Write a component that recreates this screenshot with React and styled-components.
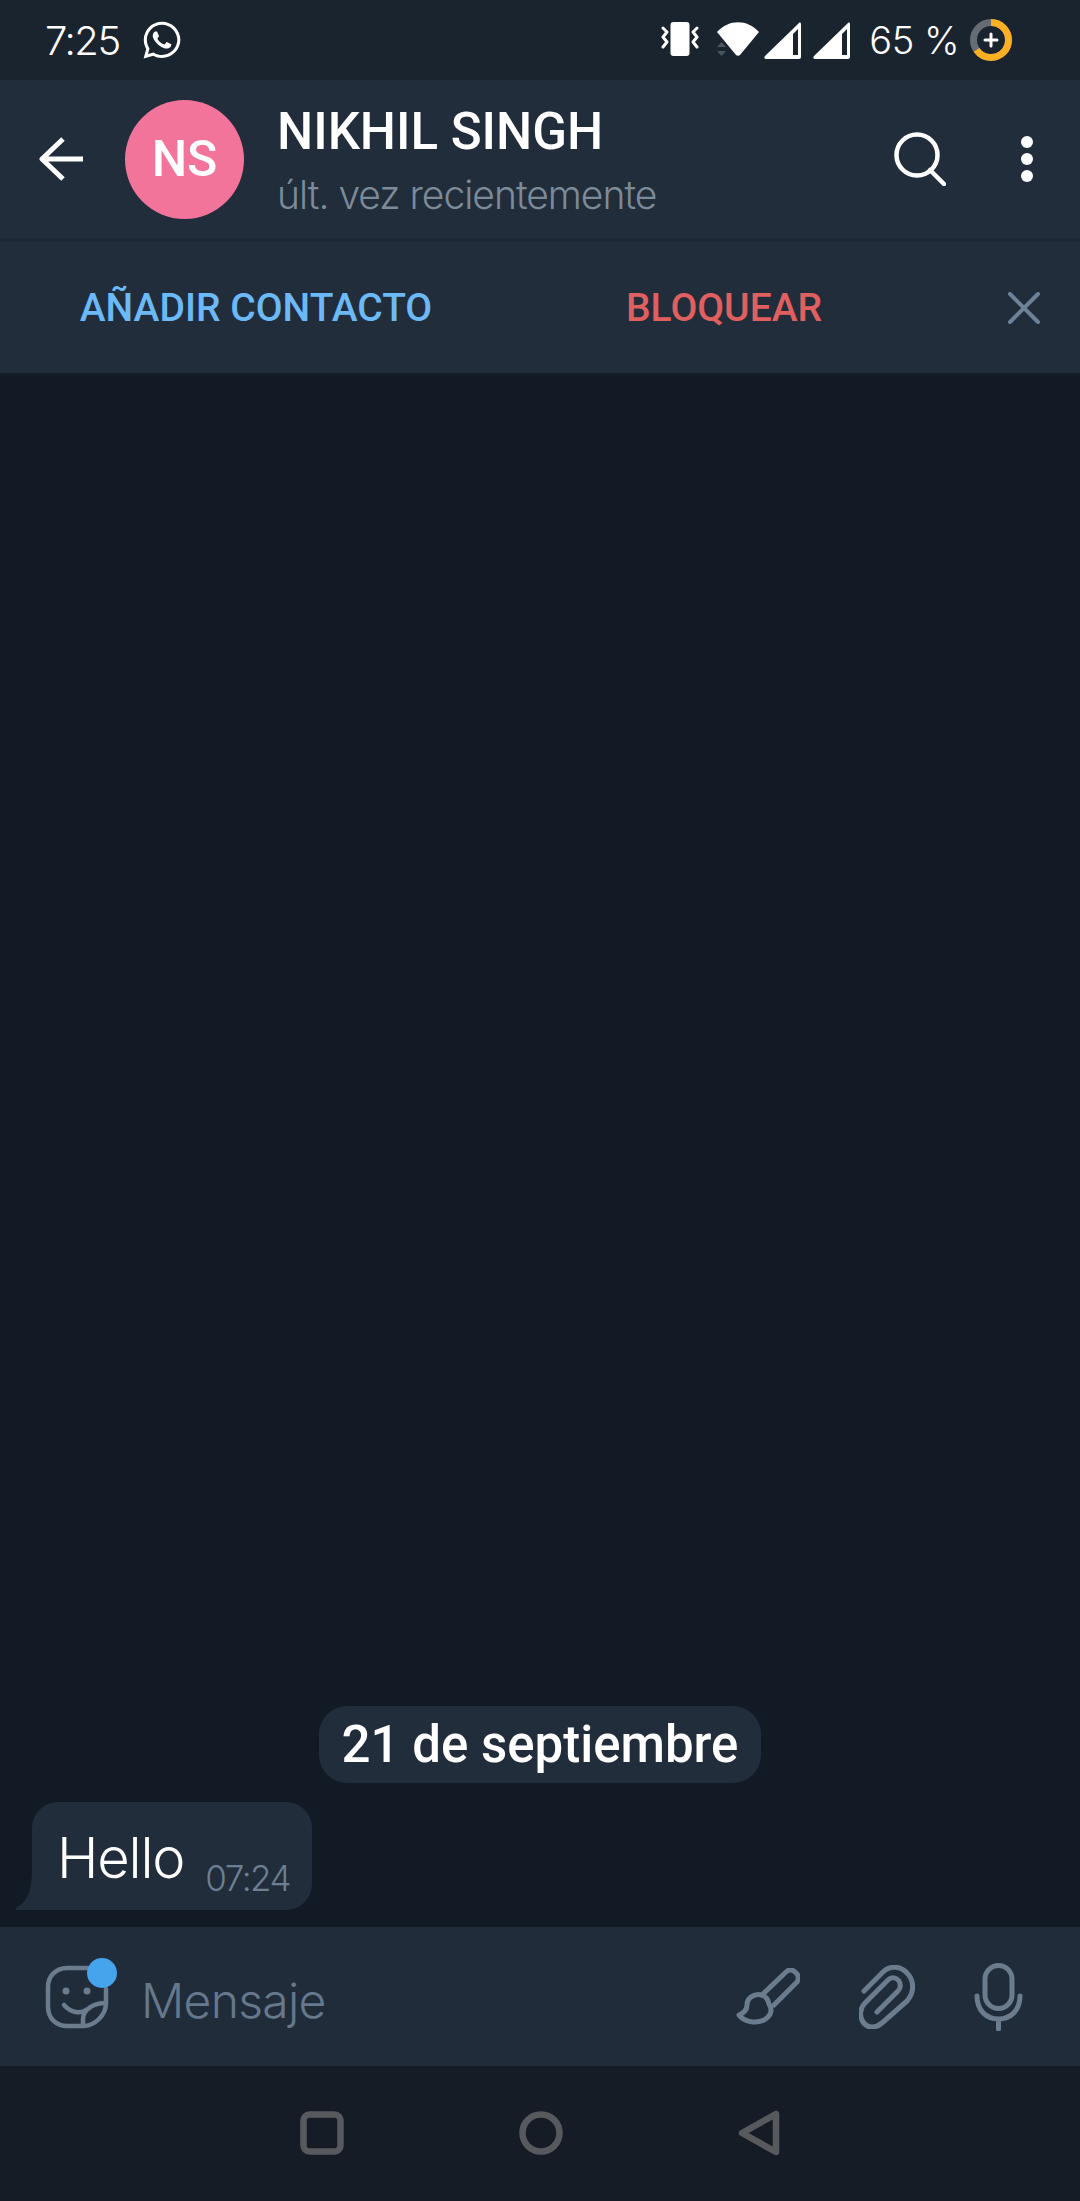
import React from 'react';
import styled, { createGlobalStyle } from 'styled-components';
import { FaWhatsapp } from 'react-icons/fa';

const GlobalStyle = createGlobalStyle`
  html, body {
    margin: 0;
    padding: 0;
    background: #121b25;
  }
`;

const Screen = styled.div`
  width: 1080px;
  height: 2201px;
  display: flex;
  flex-direction: column;
  overflow: hidden;
  background: #121b25;
  font-family: Inter, "Liberation Sans", sans-serif;
  color: #fff;
`;

const StatusBar = styled.div`
  flex: 0 0 80px;
  display: flex;
  align-items: center;
  padding: 0 68px 0 45px;
  box-sizing: border-box;
  background: #1a242f;
  font-weight: 300;
  font-size: 38px;
`;

const Time = styled.span`
  margin-right: 21px;
  font-size: 40px;
  letter-spacing: -1.5px;
`;

const StatusRight = styled.div`
  margin-left: auto;
  display: flex;
  align-items: center;
`;

const Battery = styled.span`
  margin: 0 11px 0 19px;
  letter-spacing: -0.5px;
`;

const Header = styled.div`
  flex: 0 0 162px;
  display: flex;
  align-items: center;
  padding: 0 34px 0 39px;
  box-sizing: border-box;
  background: #212d3b;
  border-bottom: 4px solid #1e2936;
`;

const Avatar = styled.div`
  width: 119px;
  height: 119px;
  margin: 0 33px 0 40px;
  border-radius: 50%;
  background: #f2749a;
  display: flex;
  align-items: center;
  justify-content: center;
  font-family: Roboto, sans-serif;
  font-weight: 500;
  font-size: 50px;
`;

const Names = styled.div`
  display: flex;
  flex-direction: column;
  flex: 1;
`;

const Name = styled.div`
  font-family: Roboto, sans-serif;
  font-weight: 500;
  font-size: 51px;
  line-height: 60px;
`;

const Seen = styled.div`
  margin-top: 11px;
  font-weight: 300;
  font-size: 39px;
  line-height: 44px;
  letter-spacing: -1px;
  color: #7d8b99;
`;

const Dots = styled.div`
  margin-left: 75px;
  margin-right: 13px;
  display: flex;
  flex-direction: column;
  gap: 5px;
`;

const Dot = styled.i`
  display: block;
  width: 12px;
  height: 12px;
  border-radius: 50%;
  background: #fff;
`;

const ActionBar = styled.div`
  flex: 0 0 133px;
  display: grid;
  grid-template-columns: 512px 424px 1fr;
  align-items: center;
  box-sizing: border-box;
  background: #212d3b;
  border-bottom: 2px solid #141d27;
`;

const Action = styled.div`
  text-align: center;
  font-family: Roboto, sans-serif;
  font-weight: 500;
  font-size: 39px;
  color: ${({ danger }) => (danger ? '#e05f5f' : '#6cb9f8')};
`;

const CloseWrap = styled.div`
  display: flex;
  justify-content: flex-end;
  padding-right: 40px;
`;

const Chat = styled.div`
  flex: 1;
  display: flex;
  flex-direction: column;
  justify-content: flex-end;
  padding: 0 0 17px 15px;
`;

const DatePill = styled.div`
  align-self: center;
  margin: 0 0 19px -15px;
  height: 77px;
  padding: 0 23px;
  display: flex;
  align-items: center;
  border-radius: 28px;
  background: #212d3b;
  font-family: Roboto, sans-serif;
  font-weight: 500;
  font-size: 51px;
`;

const BubbleRow = styled.div`
  display: flex;
  align-items: flex-end;
`;

const Tail = styled.svg`
  display: block;
  flex: none;
`;

const Bubble = styled.div`
  width: 280px;
  height: 108px;
  box-sizing: border-box;
  padding: 0 22px 0 25px;
  display: flex;
  align-items: flex-end;
  justify-content: space-between;
  background: #212d3b;
  border-radius: 26px 26px 26px 0;
`;

const Message = styled.span`
  font-weight: 300;
  font-size: 56px;
  line-height: 72px;
  margin-bottom: 16px;
  letter-spacing: -1.2px;
`;

const Stamp = styled.span`
  font-weight: 300;
  font-size: 35px;
  line-height: 40px;
  margin-bottom: 12px;
  color: #6d7f92;
  letter-spacing: -1.5px;
`;

const InputBar = styled.div`
  flex: 0 0 139px;
  display: flex;
  align-items: center;
  padding: 0 57px 0 45px;
  box-sizing: border-box;
  background: #212c3b;
`;

const Sticker = styled.div`
  position: relative;
  display: flex;
  margin-right: 32px;
`;

const Badge = styled.i`
  position: absolute;
  top: -7px;
  right: -8px;
  width: 30px;
  height: 30px;
  border-radius: 50%;
  background: #46a4ec;
`;

const Placeholder = styled.div`
  flex: 1;
  padding-top: 7px;
  font-weight: 300;
  font-size: 48px;
  letter-spacing: -0.7px;
  color: #66788c;
`;

const InputIcons = styled.div`
  display: flex;
  align-items: center;
  gap: 59px;
`;

const Icon = styled.svg`
  display: block;
  flex: none;
  fill: none;
  stroke: ${({ tone }) => tone || '#6b7c8e'};
  stroke-linecap: round;
  stroke-linejoin: round;
`;

const NavBar = styled.div`
  flex: 0 0 135px;
  display: flex;
  align-items: center;
  justify-content: center;
  gap: 175px;
  padding-bottom: 1px;
  box-sizing: border-box;
  background: #151c26;
`;

const WhatsApp = styled(FaWhatsapp)`
  display: block;
  color: #fff;
`;

const Vibrate = () => (
  <Icon width="38" height="36" viewBox="0 0 38 36" tone="#fff" strokeWidth="3" style={{ marginRight: 18 }}>
    <rect x="9.5" y="0" width="19" height="34" rx="3" fill="#fff" stroke="none" />
    <path d="M2 6l4 4-4 5 4 5-4 5" />
    <path d="M36 6l-4 4 4 5-4 5 4 5" />
  </Icon>
);

const Wifi = () => (
  <svg width="42" height="36" viewBox="0 0 42 36" style={{ display: 'block', marginRight: 5 }}>
    <path d="M0 10C12-3 30-3 42 10L23 33c-1 1-3 1-4 0z" fill="#fff" />
    <path d="M4.500 20L9 25H0zM4.500 34L9 29H0z" fill="#4b5560" />
  </svg>
);

const Signal = ({ last }) => (
  <svg width="37" height="37" viewBox="0 0 37 37" style={{ display: 'block', marginRight: last ? 0 : 12 }}>
    <path
      fillRule="evenodd"
      d="M35 1c1-1 2 0 2 1v33c0 1-1 2-2 2H2c-2 0-2-2-1-3zM29 12l5-5v26h-5z"
      fill="#fff"
    />
  </svg>
);

const BatteryRing = () => (
  <svg width="42" height="42" viewBox="0 0 42 42" style={{ display: 'block' }}>
    <circle cx="21" cy="21" r="17.500" fill="none" stroke="#676c73" strokeWidth="7" />
    <circle
      cx="21"
      cy="21"
      r="17.500"
      fill="none"
      stroke="#fbb023"
      strokeWidth="7"
      strokeDasharray="71.500 110"
      transform="rotate(-90 21 21)"
    />
    <path d="M21 15v12M15 21h12" stroke="#fff" strokeWidth="3" strokeLinecap="round" />
  </svg>
);

export default function App() {
  return (
    <Screen>
      <GlobalStyle />
      <StatusBar>
        <Time>7:25</Time>
        <WhatsApp size={42} />
        <StatusRight>
          <Vibrate />
          <Wifi />
          <Signal />
          <Signal last />
          <Battery>65 %</Battery>
          <BatteryRing />
        </StatusRight>
      </StatusBar>

      <Header>
        <Icon width="46" height="44" viewBox="0 0 46 44" tone="#fff" strokeWidth="5">
          <path d="M44 22H3M24 2L3 22l21 20" strokeLinecap="butt" />
        </Icon>
        <Avatar>NS</Avatar>
        <Names>
          <Name>NIKHIL SINGH</Name>
          <Seen>últ. vez recientemente</Seen>
        </Names>
        <Icon width="52" height="54" viewBox="0 0 52 54" tone="#fff" strokeWidth="4.500">
          <circle cx="23" cy="23" r="20.500" />
          <path d="M36 38l14 14" />
        </Icon>
        <Dots>
          <Dot />
          <Dot />
          <Dot />
        </Dots>
      </Header>

      <ActionBar>
        <Action>AÑADIR CONTACTO</Action>
        <Action danger>BLOQUEAR</Action>
        <CloseWrap>
          <Icon width="32" height="32" viewBox="0 0 32 32" tone="#6d8296" strokeWidth="4">
            <path d="M2 2l28 28M30 2L2 30" />
          </Icon>
        </CloseWrap>
      </ActionBar>

      <Chat>
        <DatePill>21 de septiembre</DatePill>
        <BubbleRow>
          <Tail width="17" height="40" viewBox="0 0 17 40">
            <path d="M17 0v40H2c-2 0-2-2 0-3C10 33 17 24 17 0z" fill="#212d3b" />
          </Tail>
          <Bubble>
            <Message>Hello</Message>
            <Stamp>07:24</Stamp>
          </Bubble>
        </BubbleRow>
      </Chat>

      <InputBar>
        <Sticker>
          <Icon width="64" height="64" viewBox="0 0 64 64" strokeWidth="4.500">
            <path d="M61 24v14c0 12-11 23-23 23H22C11 61 3 53 3 42V22C3 11 11 3 22 3h20" />
            <path d="M38 61v-7c0-9 10-16 23-16" />
            <path d="M19 40c7 8 17 9 22 5" />
            <circle cx="21" cy="26" r="3.500" fill="#6b7c8e" stroke="none" />
            <circle cx="42" cy="26" r="3.500" fill="#6b7c8e" stroke="none" />
          </Icon>
          <Badge />
        </Sticker>
        <Placeholder>Mensaje</Placeholder>
        <InputIcons>
          <Icon width="64" height="57" viewBox="0 0 64 57" strokeWidth="5">
            <path d="M26 27L50 4c3-3 6-3 9 0l2 2c2 3 2 5 0 8L38 37" />
            <path d="M26 27c-8-2-15 3-15 10 0 5-3 8-8 10 5 7 17 9 25 5 7-4 9-10 5-16-1-5-4-8-7-9z" />
          </Icon>
          <Icon width="56" height="64" viewBox="0 0 56 64" strokeWidth="5">
            <path d="M5 26L24 7c7-7 18-6 24 1 7 7 8 19 0 28L23 58c-7 6-15 5-19-1-4-6-3-14 2-19l23-23c3-3 8-3 11 1 2 4 2 7-1 10L18 47" />
          </Icon>
          <Icon width="49" height="68" viewBox="0 0 49 68" strokeWidth="5">
            <rect x="11" y="2.500" width="27" height="43" rx="13.500" />
            <path d="M3 33c0 14 9 23 21.500 23S46 47 46 33M24.500 56v10" />
          </Icon>
        </InputIcons>
      </InputBar>

      <NavBar>
        <Icon width="44" height="44" viewBox="0 0 44 44" tone="#58595d" strokeWidth="6.500">
          <rect x="3.500" y="3.500" width="37" height="37" rx="6" />
        </Icon>
        <Icon width="44" height="44" viewBox="0 0 44 44" tone="#58595d" strokeWidth="6.500">
          <circle cx="22" cy="22" r="18.500" />
        </Icon>
        <Icon width="42" height="46" viewBox="0 0 42 46" tone="#58595d" strokeWidth="6.500">
          <path d="M38 4v38L4 23z" />
        </Icon>
      </NavBar>
    </Screen>
  );
}
